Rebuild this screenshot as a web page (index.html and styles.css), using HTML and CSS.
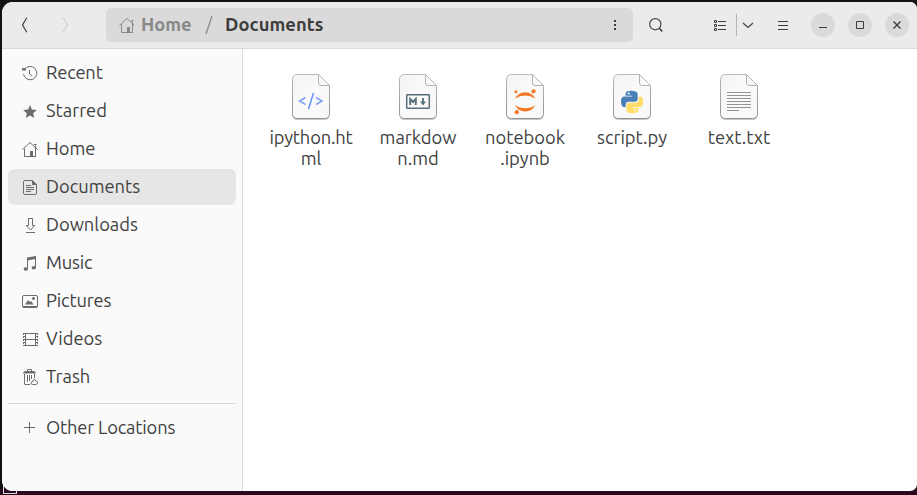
FILE: index.html
```html
<!DOCTYPE html>
<html lang="en">
<head>
<meta charset="utf-8">
<title>Documents</title>
<link rel="stylesheet" href="styles.css">
</head>
<body>
<svg width="0" height="0" class="defs" aria-hidden="true">
  <defs>
    <linearGradient id="paper" x1="0" y1="0" x2="1" y2="1"><stop offset="0" stop-color="#f3f3f3"/><stop offset=".45" stop-color="#fafafa"/><stop offset="1" stop-color="#f7f7f7"/></linearGradient>
    <linearGradient id="edge" x1="0" y1="0" x2="0" y2="1"><stop offset="0" stop-color="#b9b9b9"/><stop offset="1" stop-color="#929292"/></linearGradient>
    <symbol id="page" viewBox="0 0 42 50">
      <path d="M7 3.500H28L39.500 14V43q0 5-5 5H7.500q-5 0-5-5V8q0-4.500 4.500-4.500Z" fill="#000" opacity=".22"/>
      <path d="M7.500 2.500H28.500L39.500 13.500V41.500q0 5-5 5H7.500q-5 0-5-5V7.500q0-5 5-5Z" fill="url(#paper)" stroke="url(#edge)"/>
      <path d="M28.500 2.500V11q0 2.500 2.500 2.500H39.500Z" fill="#fafafa" stroke="#b4b4b4"/>
    </symbol>
    <symbol id="house" viewBox="0 0 16 16">
      <path d="M.5 8.500 8 1.500 15.500 8.500M2.500 7.500V15.500H13.500V4.500M12 3.500h2.500M13.500 7v8.500" fill="none" stroke="currentColor"/>
      <path d="M8 10h3v6H8z" fill="currentColor"/>
    </symbol>
  </defs>
</svg>
<div class="desk-corner"></div>
<div class="window">
  <header class="bar">
    <svg class="nav" width="8" height="18" viewBox="0 0 8 18"><path d="M5.800 1.800 1.500 9l4.300 7.200" fill="none" stroke="#3d3d3d" stroke-width="1.200"/></svg>
    <svg class="nav next" width="8" height="18" viewBox="0 0 8 18"><path d="M1 1.800 5.300 9 1 16.200" fill="none" stroke="#cfcfcf" stroke-width="1.200"/></svg>
    <div class="path">
      <svg class="path-home" width="16" height="16"><use href="#house"/></svg>
      <span class="crumb parent">Home</span>
      <svg class="slash" width="8" height="20" viewBox="0 0 8 20"><path d="M7 1 1 19" stroke="#8c8c8c" stroke-width="1.300"/></svg>
      <span class="crumb current">Documents</span>
      <svg class="dots" width="2" height="10" viewBox="0 0 2 10" fill="#3d3d3d"><path d="M0 0h2v2H0zM0 4h2v2H0zM0 8h2v2H0z"/></svg>
    </div>
    <svg class="search" width="14" height="14" viewBox="0 0 14 14" fill="none" stroke="#484848"><circle cx="6.300" cy="6.200" r="5.600" stroke-width="1.200"/><path d="m10 10 3.300 3.300" stroke-width="1.700"/></svg>
    <svg class="list" width="12" height="11" viewBox="0 0 12 11" fill="none" stroke="#3d3d3d"><path d="M.5.5h2v2h-2zM.5 4.500h2v2h-2zM.5 8.500h2v2h-2zM4 1.500h8M4 5.500h8M4 9.500h8"/></svg>
    <i class="divider"></i>
    <svg class="chev" width="12" height="7" viewBox="0 0 12 7"><path d="M1 1l5 4.500L11 1" fill="none" stroke="#484848" stroke-width="1.300"/></svg>
    <svg class="menu" width="10" height="9" viewBox="0 0 10 9"><path d="M0 .5h10M0 4.500h10M0 8.500h10" stroke="#3d3d3d"/></svg>
    <div class="controls">
      <b><svg width="8" height="8" viewBox="0 0 8 8"><path d="M0 6.500h8" stroke="#3d3d3d"/></svg></b>
      <b><svg width="8" height="8" viewBox="0 0 8 8"><path d="M.5.5h7v7h-7z" fill="none" stroke="#3d3d3d"/></svg></b>
      <b><svg width="8" height="8" viewBox="0 0 8 8"><path d="m.5.5 7 7m0-7-7 7" stroke="#3d3d3d" stroke-width="1.400"/></svg></b>
    </div>
  </header>
  <div class="body">
    <nav class="side">
      <div class="row"><svg viewBox="0 0 16 16" fill="none" stroke="currentColor"><path d="M2.300 4.800A6.700 6.700 0 1 1 1.500 9" stroke-width="1"/><path d="M7.500 5v4l2.500 2"/><path d="M0 2.500l1.500 1 2-1L4 5.500H0z" fill="currentColor" stroke="none"/></svg><span class="tight">Recent</span></div>
      <div class="row"><svg viewBox="0 0 16 16"><path fill="currentColor" d="m8 2 1.900 4.600 5 .4-3.800 3.200 1.200 4.900L8 12.500l-4.300 2.600 1.200-4.900L1.100 7l5-.4z"/></svg><span>Starred</span></div>
      <div class="row"><svg><use href="#house"/></svg><span>Home</span></div>
      <div class="row active"><svg viewBox="0 0 16 16"><path d="M3 1.500h7.500l4 4V14q0 1.500-1.500 1.500H3q-1.500 0-1.500-1.500V3q0-1.500 1.500-1.500ZM4 6.500h5M4 8.500h8M4 10.500h8M4 12.500h5" fill="none" stroke="currentColor"/><path d="M10 1v5h5z" fill="currentColor"/></svg><span>Documents</span></div>
      <div class="row"><svg viewBox="0 0 16 16"><path d="M6.500 1.500h4v7h2.200L8.500 13 4.300 8.500h2.200zM4 15.500h9" fill="none" stroke="currentColor"/></svg><span>Downloads</span></div>
      <div class="row"><svg viewBox="0 0 16 16"><path d="M5.500 13.500V4l8-2V12.500" fill="none" stroke="currentColor"/><path d="M5 2.500 14 1v3L5 5.500z" fill="currentColor"/><ellipse cx="3.800" cy="14" rx="2.200" ry="1.800" fill="currentColor"/><ellipse cx="11.800" cy="12.800" rx="2.200" ry="1.800" fill="currentColor"/></svg><span class="tight">Music</span></div>
      <div class="row"><svg viewBox="0 0 16 16"><rect x=".5" y="2.500" width="15" height="12" rx="1.500" fill="none" stroke="currentColor"/><path d="M1 13h14v1.500H1zM3 11.500 6 7l1.800 2 1.200-1 2.500 3.500z" fill="currentColor"/><circle cx="11.500" cy="5.500" r="1.400" fill="currentColor"/></svg><span class="tight">Pictures</span></div>
      <div class="row"><svg viewBox="0 0 16 16"><path d="M3.500 2v13M13.500 2v13M3.500 2.500h10M3.500 8.500h10M3.500 14.500h10" fill="none" stroke="currentColor"/><path d="M1.500 2v13M15.500 2v13" stroke="currentColor" stroke-dasharray="2 1"/><path d="M2 2.500h1.500M2 5.500h1.500M2 8.500h1.500M2 11.500h1.500M2 14.500h1.500M14 2.500h2M14 5.500h2M14 8.500h2M14 11.500h2M14 14.500h2" stroke="currentColor"/></svg><span>Videos</span></div>
      <div class="row"><svg viewBox="0 0 16 16"><path d="M5.500 2V.5h4V2M2.500 5v10q0 .5.500.5h5M5.500 6v7M7.500 6v6M9.500 6v4M12.500 5v4" fill="none" stroke="currentColor"/><path d="M1 4.500q0-2 2-2.500h9q2 .500 2 2.500z" fill="currentColor"/><path d="M10.500 15.500q-2-.3-1.500-2 .6-1 1.800-.7Q11 10.500 12.500 10q.3 1.500 1.500 2 2 .5 1.500 2.200-.5 1.300-1.700 1.300z" fill="none" stroke="currentColor"/></svg><span>Trash</span></div>
      <hr>
      <div class="row"><svg viewBox="0 0 16 16"><path d="M2 7.500h11M7.500 2v11" stroke="currentColor"/></svg><span class="tight">Other Locations</span></div>
    </nav>
    <main class="files">
      <div class="file"><svg viewBox="0 0 42 50"><use href="#page"/><path d="m15.500 25.500-6 3.500 6 3.500M26 25.500l6 3.500-6 3.500" fill="none" stroke="#7e9ff0" stroke-width="1.500"/><path d="m23.500 21-5 16" stroke="#5c8cff" stroke-width="1.400"/></svg><span class="tight">ipython.ht</span><span>ml</span></div>
      <div class="file"><svg viewBox="0 0 42 50"><use href="#page"/><rect x="9.700" y="22.700" width="22.600" height="13.600" rx=".7" fill="#fafafa" stroke="#546e7a" stroke-width="1.500"/><path d="M13.200 33v-6l2.800 3 2.800-3v6" fill="none" stroke="#546e7a" stroke-width="1.900"/><path d="M26 26v5" stroke="#546e7a" stroke-width="1.800"/><path d="M23 29.500h6L26 33.500z" fill="#546e7a"/></svg><span>markdow</span><span>n.md</span></div>
      <div class="file"><svg viewBox="0 0 42 50"><use href="#page"/><path d="M11 26.800q3-6.500 10.200-6.500t10 6.500q-4.500-3.200-10-3.200T11 26.800ZM11 33q4.500 3.200 10.200 3.200T31.200 33q-3 6.500-10 6.500T11 33Z" fill="#f37726"/><circle cx="12" cy="19.800" r="1.500" fill="#f37726"/><circle cx="29.500" cy="19.300" r="2.100" fill="#f37726"/><circle cx="12.800" cy="40.200" r="2.100" fill="#f37726"/></svg><span>notebook</span><span>.ipynb</span></div>
      <div class="file"><svg viewBox="0 0 42 50"><use href="#page"/><path d="M14.500 22q0-3.200 5.800-3.200T26.700 22v4.800q0 3-3 3h-6q-3 0-3 3v2.400h-1.200Q10 35.200 10 29.500q0-5 3.500-5h7.500v-.8h-6.500z" fill="#4a80b5"/><path d="M27.700 24.500h1.500q3 0 3 5 0 5.700-3.500 5.700h-7.300v.8h6v2q0 3.200-6 3.200T15.500 38v-4.200q0-3 3-3h6.200q3 0 3-3z" fill="#ffdc68"/><circle cx="17.700" cy="21.500" r="1" fill="#fff"/><circle cx="24.200" cy="38.200" r="1" fill="#fff"/></svg><span>script.py</span></div>
      <div class="file"><svg viewBox="0 0 42 50"><use href="#page"/><path d="M9 20.500h24M9 23.500h24M9 26.500h24M9 29.500h24M9 32.500h24M9 35.500h24M9 38.500h12" stroke="#939393"/></svg><span>text.txt</span></div>
    </main>
  </div>
</div>
</body>
</html>
```
FILE: styles.css
```css
* { box-sizing: border-box; }
body { margin: 0; height: 495px; overflow: hidden; padding: 2px 0 4px 2px; background: linear-gradient(#141214 0 488px, #2b0a20 490px 494px, #1c0716); color: #424242; font-family: Ubuntu, "Noto Sans", sans-serif; font-size: 18.330px; }
svg { display: block; flex: none; }
.defs { position: absolute; }
.window { position: relative; height: 489px; display: flex; flex-direction: column; overflow: hidden; border-radius: 11px 7px 7px 11px; background: #fff; }
.desk-corner { position: absolute; left: 3px; top: 481px; width: 14px; height: 13px; border: 1px solid #ddd; background: #2b0a20; }
.bar { height: 47px; flex: none; display: flex; align-items: center; background: #ebebeb; border-bottom: 1px solid #dadada; padding-left: 19px; }
.next { margin-left: 33px; }
.path { margin-left: 36px; width: 527px; height: 34px; border-radius: 5px; background: #dadada; display: flex; align-items: center; padding-left: 13px; }
.crumb { font-weight: 700; color: #888; white-space: nowrap; line-height: 24px; padding-bottom: 2px; }
.path-home { color: #888; margin-right: 6px; }
.crumb.current { color: #3d3d3d; letter-spacing: .08px; }
.parent { width: 64px; }
.slash { margin-right: 12px; }
.dots { margin-left: auto; margin-right: 17px; }
.search { margin-left: 16px; }
.list { margin-left: 51px; }
.divider { width: 1px; height: 22px; background: #b5b5b5; margin-left: 10px; }
.chev { margin-left: 5px; }
.menu { margin-left: 24px; }
.controls { display: flex; gap: 13px; margin-left: 23px; }
.controls b { width: 24px; height: 24px; border-radius: 50%; background: #dadada; display: grid; place-items: center; }
.body { flex: 1; display: flex; min-height: 0; }
.side { width: 241px; flex: none; padding: 6px 6px 0; background: #fafafa; border-right: 1px solid #dadada; }
.row { height: 36px; margin-bottom: 2px; border-radius: 6px; display: flex; align-items: center; padding-left: 14px; gap: 8px; white-space: nowrap; }
.row span { line-height: 22px; padding-bottom: 2px; }
.tight { letter-spacing: -.18px; }
.row svg { width: 16px; height: 16px; color: #6c6c6c; }
.row.active { background: #e6e6e6; }
.side hr { border: 0; height: 1px; background: #dadada; margin: 8px 0 6px; }
.files { padding: 23px 0 0 14px; display: flex; align-items: flex-start; }
.file { width: 107px; display: flex; flex-direction: column; align-items: center; line-height: 21px; }
.file span { padding-left: 1px; }
.file svg { width: 42px; height: 50px; margin-bottom: 5px; }
```
